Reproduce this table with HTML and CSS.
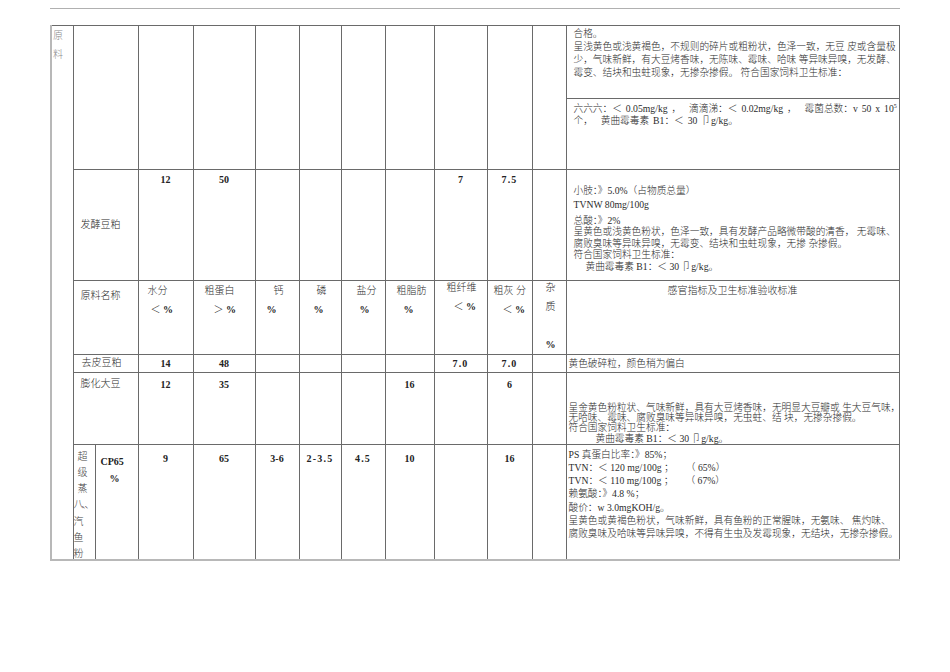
FILE: index.html
```html
<!DOCTYPE html>
<html lang="zh">
<head>
<meta charset="utf-8">
<title>原料验收标准</title>
<link rel="stylesheet" href="styles.css">
</head>
<body>
<div class="page">
  <div class="rule"></div>
  <table class="grid">
    <colgroup>
      <col class="w22"><col class="w22"><col class="w43"><col class="w55"><col class="w62"><col class="w44"><col class="w42"><col class="w44"><col class="w49"><col class="w53"><col class="w45"><col class="w34"><col class="w333">
    </colgroup>
    <tr class="r1a">
      <td rowspan="7" class="side"><div>原</div><div>料</div></td>
      <td colspan="2" rowspan="2"></td>
      <td rowspan="2"></td><td rowspan="2"></td><td rowspan="2"></td><td rowspan="2"></td><td rowspan="2"></td><td rowspan="2"></td><td rowspan="2"></td><td rowspan="2"></td><td rowspan="2"></td>
      <td class="txt t1a">合格。<br>呈浅黄色或浅黄褐色，不规则的碎片或粗粉状，色泽一致，无豆 皮或含量极<br>少，气味新鲜，有大豆烤香味，无陈味、霉味、哈味 等异味异嗅，无发酵、<br>霉变、结块和虫蛀现象，无掺杂掺假。 符合国家饲料卫生标准：</td>
    </tr>
    <tr class="r1b">
      <td class="txt t1b">六六六：＜ 0.05mg/kg ， &nbsp;滴滴涕：＜ 0.02mg/kg ， &nbsp;霉菌总数：v 50 x 10<sup>5</sup><br>个， &nbsp;黄曲霉毒素 B1：＜ 30 卩g/kg。</td>
    </tr>
    <tr class="r2">
      <td colspan="2" class="name mid">发酵豆粕</td>
      <td class="n">12</td><td class="n">50</td><td></td><td></td><td></td><td></td><td class="n">7</td><td class="n d">7.5</td><td></td>
      <td class="txt t2">
        <div class="l">小肢：》5.0%（占物质总量）</div>
        <div class="l g1">TVNW 80mg/100g</div>
        <div class="l g2">总酸：》2%</div>
        <div class="l">呈黄色或浅黄色粉状，色泽一致，具有发酵产品略微带酸的清香， 无霉味、</div>
        <div class="l">腐败臭味等异味异嗅，无霉变、结块和虫蛀现象，无掺 杂掺假。</div>
        <div class="l">符合国家饲料卫生标准：</div>
        <div class="l in1">黄曲霉毒素 B1：＜ 30 卩g/kg。</div>
      </td>
    </tr>
    <tr class="r3">
      <td colspan="2" class="name hd">原料名称</td>
      <td class="hd h1"><div class="a">水分</div><div class="b">＜ <b>%</b></div></td>
      <td class="hd h2"><div class="a">粗蛋白</div><div class="b">＞ <b>%</b></div></td>
      <td class="hd h3"><div class="a">钙</div><div class="b"><b>%</b></div></td>
      <td class="hd h4"><div class="a">磷</div><div class="b"><b>%</b></div></td>
      <td class="hd h5"><div class="a">盐分</div><div class="b"><b>%</b></div></td>
      <td class="hd h6"><div class="a">粗脂肪</div><div class="b"><b>%</b></div></td>
      <td class="hd h7 up"><div class="a">粗纤维</div><div class="b">＜ <b>%</b></div></td>
      <td class="hd h8"><div class="a">粗灰 分</div><div class="b">＜ <b>%</b></div></td>
      <td class="hd h9 up"><div class="a">杂</div><div class="a">质</div><div class="a">&nbsp;</div><div class="a"><b>%</b></div></td>
      <td class="hd ctr">感官指标及卫生标准验收标准</td>
    </tr>
    <tr class="r4">
      <td colspan="2" class="name">去皮豆粕</td>
      <td class="n">14</td><td class="n">48</td><td></td><td></td><td></td><td></td><td class="n d">7.0</td><td class="n d">7.0</td><td></td>
      <td class="txt t4">黄色破碎粒，颜色稍为偏白</td>
    </tr>
    <tr class="r5">
      <td colspan="2" class="name">膨化大豆</td>
      <td class="n">12</td><td class="n">35</td><td></td><td></td><td></td><td class="n">16</td><td></td><td class="n">6</td><td></td>
      <td class="txt t5">
        <div class="l">呈金黄色粉粒状、气味新鲜，具有大豆烤香味，无明显大豆瓣或 生大豆气味，</div>
        <div class="l">无哈味、霉味、腐败臭味等异味异嗅，无虫蛀、结 块，无掺杂掺假。</div>
        <div class="l">符合国家饲料卫生标准：</div>
        <div class="l in2">黄曲霉毒素 B1：＜ 30 卩g/kg。</div>
      </td>
    </tr>
    <tr class="r6">
      <td class="vert"><div class="vbox"><div class="c1">超</div><div class="c1">级</div><div class="c1">蒸</div><div class="sq">八、、</div><div>汽</div><div>鱼</div><div>粉</div></div></td>
      <td class="cp"><div>CP65</div><div class="pc">%</div></td>
      <td class="n">9</td><td class="n">65</td><td class="n">3-6</td><td class="n d">2-3.5</td><td class="n d">4.5</td><td class="n">10</td><td></td><td class="n">16</td><td></td>
      <td class="txt t6">PS 真蛋白比率：》85%；<br>TVN：＜ 120 mg/100g ； &nbsp; &nbsp; （ 65%）<br>TVN：＜ 110 mg/100g ； &nbsp; &nbsp; （ 67%）<br>赖氨酸：》4.8 %；<br>酸价：w 3.0mgKOH/g。<br>呈黄色或黄褐色粉状，气味新鲜，具有鱼粉的正常腥味，无氨味、 焦灼味、<br>腐败臭味及哈味等异味异嗅，不得有生虫及发霉现象，无结块，无掺杂掺假。</td>
    </tr>
  </table>
</div>
</body>
</html>
```

FILE: styles.css
```css
html, body {
  margin: 0;
  padding: 0;
  background: #ffffff;
}
body {
  font-family: "Liberation Serif", "Noto Sans CJK SC", serif;
  font-size: 10px;
  color: #2a2a2a;
}
.page {
  padding: 8px 0 0 50px;
}
.rule {
  width: 850px;
  border-top: 1px solid #b0b0b0;
  margin-bottom: 16px;
}
.grid {
  border-collapse: collapse;
  table-layout: fixed;
  width: 849.5px;
  margin-left: 0;
  border-left: 2px solid #b8b8b8;
  border-bottom: 2px solid #b8b8b8;
  border-right: 1px solid #888888;
}
.w22 { width: 22px; }
.w43 { width: 43px; }
.w55 { width: 55px; }
.w62 { width: 62px; }
.w44 { width: 44px; }
.w42 { width: 42px; }
.w49 { width: 49px; }
.w53 { width: 53px; }
.w45 { width: 45px; }
.w34 { width: 34px; }
.w333 { width: 333px; }

.grid td {
  box-sizing: border-box;
  border: 1px solid #6a6a6a;
  padding: 0;
  vertical-align: top;
  overflow: hidden;
  white-space: nowrap;
  font-weight: 300;
}
.r1a td { height: 73px; }
.r1b td { height: 71px; }
.r2 td { height: 111px; }
.r3 td { height: 69px; }
.r4 td { height: 18px; }
.r5 td { height: 71px; }
.r6 td { height: 116px; }

.grid td.side {
  border-left: 2px solid #b8b8b8;
  color: #8a8a8a;
  line-height: 19px;
  padding-top: 0;
  padding-left: 1px;
}

.name {
  padding-left: 7px !important;
  padding-top: 5px !important;
  line-height: 12px;
}
.grid td.mid {
  vertical-align: middle;
  padding-top: 0 !important;
}
.r4 .name {
  padding-top: 2px !important;
  padding-left: 8px !important;
}

.n {
  text-align: center;
  font-weight: bold !important;
  font-family: "Liberation Serif", serif;
  line-height: 12px;
  color: #222222;
}
.n.d { letter-spacing: 1.2px; }
.r2 .n { padding-top: 4px !important; }
.r4 .n { padding-top: 3px !important; }
.r5 .n { padding-top: 6px !important; }
.r6 .n { padding-top: 8px !important; }

.txt {
  padding-left: 7px !important;
  font-size: 9.7px;
}
.t1a {
  line-height: 13px;
  padding-top: 1px !important;
}
.t1b {
  line-height: 12px;
  padding-top: 4px !important;
  word-spacing: 1.5px;
}
.t1b sup {
  font-size: 6px;
  line-height: 0;
}
.t2 {
  padding-top: 15px !important;
}
.t2 .l { line-height: 11.5px; }
.t2 .g1 { margin-top: 2px; }
.t2 .g2 { margin-top: 4.5px; }
.t2 .in1 { padding-left: 12px; }

.hd {
  line-height: 19px;
}
.hd b { font-weight: bold; color: #222222; }
.h1 .a { padding-left: 9px; }
.h1 .b { padding-left: 12px; }
.h2 .a { padding-left: 11px; }
.h2 .b { padding-left: 20px; }
.h3 .a { padding-left: 18px; }
.h3 .b { padding-left: 11px; }
.h4 .a { padding-left: 17px; }
.h4 .b { padding-left: 14px; }
.h5 .a { padding-left: 15px; }
.h5 .b { padding-left: 18px; }
.h6 .a { padding-left: 11px; }
.h6 .b { padding-left: 18px; }
.h7 .a { padding-left: 12px; }
.h7 .b { padding-left: 19px; }
.h8 .a { padding-left: 6px; }
.h8 .b { padding-left: 15px; }
.h9 .a { padding-left: 13px; }
.up .a:first-child { margin-top: -3px; }
.ctr {
  text-align: center;
}

.t4 {
  padding-left: 2px !important;
  padding-top: 3px !important;
  line-height: 12px;
}
.t5 {
  padding-left: 2px !important;
  padding-top: 30px !important;
}
.t5 .l { line-height: 10.2px; }
.t5 .in2 { padding-left: 27px; }

.vert { padding: 0; }
.vbox {
  height: 114px;
  overflow: hidden;
  line-height: 16.2px;
  padding-top: 4px;
  box-sizing: border-box;
  color: #444444;
}
.vbox .c1 { padding-left: 4px; }
.vbox .sq { letter-spacing: -2px; }

.cp {
  padding-left: 5px !important;
  padding-top: 8px !important;
  font-weight: bold !important;
  line-height: 17px;
  color: #222222;
}
.cp .pc { padding-left: 9px; }

.t6 {
  padding-left: 2px !important;
  padding-top: 3px !important;
  line-height: 13.2px;
}
```
